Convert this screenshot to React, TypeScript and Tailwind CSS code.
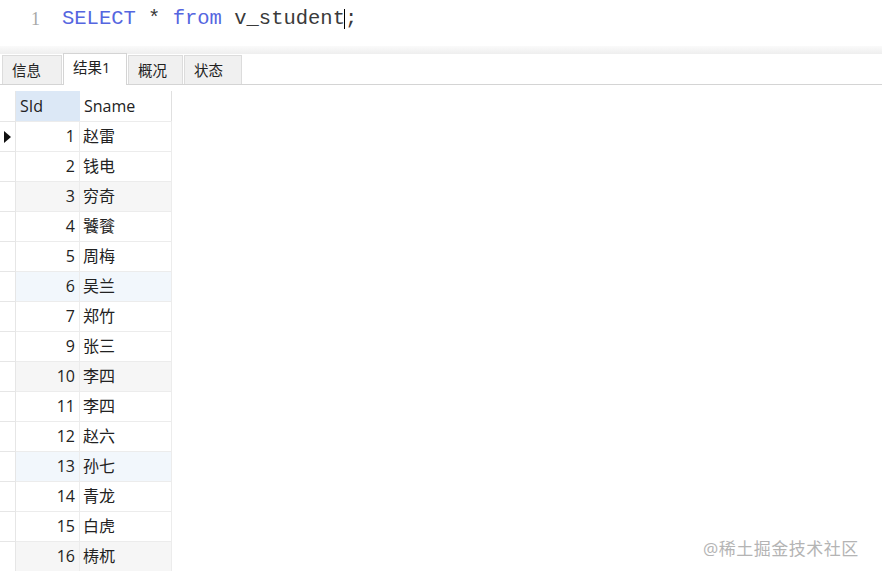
import React from "react";

const rows: { id: number; name: string; bg: string }[] = [
  { id: 1, name: "赵雷", bg: "bg-white" },
  { id: 2, name: "钱电", bg: "bg-white" },
  { id: 3, name: "穷奇", bg: "bg-[#f6f6f6]" },
  { id: 4, name: "饕餮", bg: "bg-white" },
  { id: 5, name: "周梅", bg: "bg-white" },
  { id: 6, name: "吴兰", bg: "bg-[#f2f7fc]" },
  { id: 7, name: "郑竹", bg: "bg-white" },
  { id: 9, name: "张三", bg: "bg-white" },
  { id: 10, name: "李四", bg: "bg-[#f6f6f6]" },
  { id: 11, name: "李四", bg: "bg-white" },
  { id: 12, name: "赵六", bg: "bg-white" },
  { id: 13, name: "孙七", bg: "bg-[#f2f7fc]" },
  { id: 14, name: "青龙", bg: "bg-white" },
  { id: 15, name: "白虎", bg: "bg-white" },
  { id: 16, name: "梼杌", bg: "bg-[#f6f6f6]" },
];

const tabs = ["信息", "结果1", "概况", "状态"];

export default function App() {
  const sans = "font-['Microsoft_YaHei','Open_Sans','Noto_Sans_CJK_SC',sans-serif]";
  return (
    <div className={`w-[882px] h-[578px] bg-white overflow-hidden relative ${sans}`}>
      {/* editor */}
      <div className="h-[46px] flex items-start pt-[6px] font-['Liberation_Mono','Noto_Sans_CJK_SC',monospace] text-[20.5px] leading-[26px]">
        <span className="w-[44px] text-right pr-[4px] text-[#a8a8a8] text-[18px] font-['Liberation_Serif',serif]">1</span>
        <span className="ml-[18px] whitespace-pre text-[#3a3a3a]">
          <span className="text-[#5566e0]">SELECT</span> * <span className="text-[#5566e0]">from</span> v_student
          <span className="inline-block w-[1px] h-[20px] bg-black align-middle -ml-[1px]" />;
        </span>
      </div>
      <div className="h-[8px] bg-gradient-to-b from-[#fafafa] to-[#eeeeee]" />

      {/* tabs */}
      <div className="h-[31px] flex items-end border-b border-[#d4d4d4] pl-[2px] text-[14.5px] text-[#222]">
        {tabs.map((t, i) =>
          i === 1 ? (
            <div
              key={t}
              className="h-[32px] w-[64px] -mb-[1px] bg-white border border-b-0 border-[#d4d4d4] pl-[9px] pt-[3px] mx-[1px]"
            >
              {t}
            </div>
          ) : (
            <div
              key={t}
              className={`h-[29px] ${i === 0 ? "w-[60px]" : i === 2 ? "w-[55px]" : "w-[58px] ml-[1px]"} bg-[#f0f0f0] border border-b-0 border-[#dcdcdc] pl-[9px] pt-[4px]`}
            >
              {t}
            </div>
          )
        )}
      </div>

      {/* grid */}
      <div className="mt-[6px] text-[16px] text-[#222]">
        <div className="flex h-[30px]">
          <div className="w-[16px] border-r border-[#e6e6e6]" />
          <div className="w-[64px] bg-[#dce8f6] pl-[4px] leading-[30px]">SId</div>
          <div className="w-[92px] border-r border-[#e0e0e0] pl-[4px] leading-[30px]">Sname</div>
        </div>
        {rows.map((r, i) => (
          <div key={r.id} className="flex h-[30px]">
            <div className="w-[16px] border-r border-t border-[#e6e6e6] flex items-center justify-center">
              {i === 0 && (
                <svg width="7" height="12" viewBox="0 0 7 12">
                  <path d="M0 0 L7 6 L0 12 Z" fill="#111" />
                </svg>
              )}
            </div>
            <div className={`w-[64px] ${r.bg} border-t border-r border-[#ececec] text-right pr-[4px] leading-[29px]`}>
              {r.id}
            </div>
            <div className={`w-[92px] ${r.bg} border-t border-r border-[#ececec] pl-[3px] leading-[29px]`}>
              {r.name}
            </div>
          </div>
        ))}
      </div>

      {/* watermark */}
      <div className="absolute left-[703px] top-[536px] text-[17px] text-[#b4b4b4] tracking-[0.5px]">
        @稀土掘金技术社区
      </div>
    </div>
  );
}
